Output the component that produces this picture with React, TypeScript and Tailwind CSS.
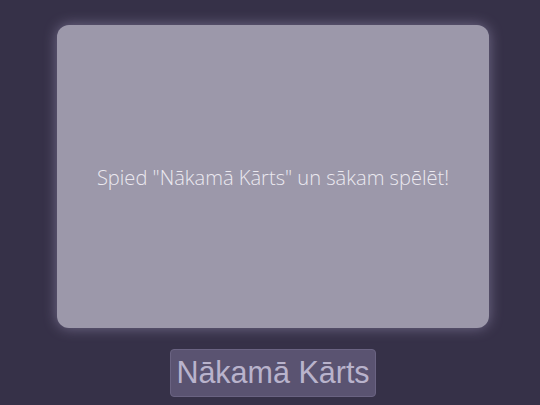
export default function App() {
  return (
    <div className="flex min-h-[405px] w-full flex-col items-center bg-[#363148] pt-[25px] pl-[6px]">
      <div className="flex h-[303px] w-[432px] items-center justify-center rounded-[12px] bg-[#9c98aa] shadow-[0_0_14px_rgba(190,180,220,0.45)]">
        <p className="mt-[3px] font-['Open_Sans',sans-serif] text-[20.1px] font-light text-[#ebe9f0]">
          Spied "Nākamā Kārts" un sākam spēlēt!
        </p>
      </div>
      <button className="mt-[21px] h-[48px] w-[206px] rounded-[4px] border border-[#6a6382] bg-[#5a5371] font-['Liberation_Sans',sans-serif] text-[30.5px] text-[#b9b3cc]">
        Nākamā Kārts
      </button>
    </div>
  );
}
